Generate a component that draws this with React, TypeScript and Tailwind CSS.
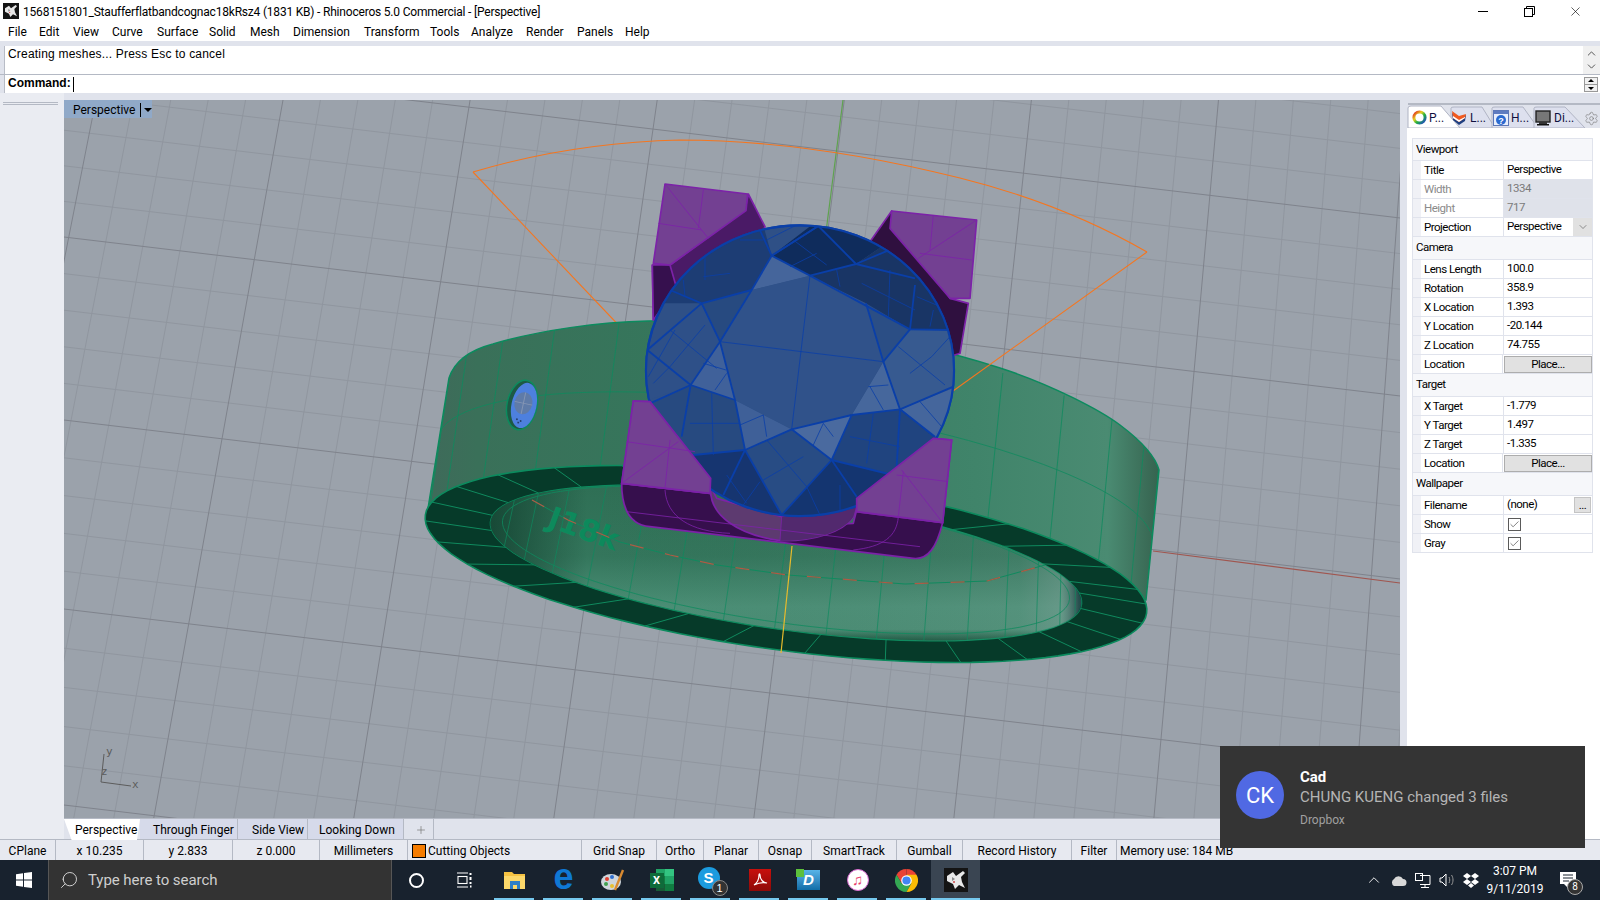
import React from "react";
import { Settings, ChevronUp, ChevronDown, X, Search, Plus, Check } from "lucide-react";

type Pt = [number, number];
const ell = (c: Pt, a: Pt, b: Pt, deg: number): Pt => {
  const t = (deg * Math.PI) / 180;
  return [c[0] + a[0] * Math.cos(t) + b[0] * Math.sin(t), c[1] + a[1] * Math.cos(t) + b[1] * Math.sin(t)];
};
const pts = (list: Pt[]) => list.map((p) => `${p[0].toFixed(1)},${p[1].toFixed(1)}`).join(" ");
const arc = (c: Pt, a: Pt, b: Pt, from: number, to: number, n = 60) => {
  const out: Pt[] = [];
  for (let i = 0; i <= n; i++) out.push(ell(c, a, b, from + ((to - from) * i) / n));
  return out;
};

const BOT: [Pt, Pt, Pt] = [[786, 564], [360, 40], [25, 90]];
const TOP: [Pt, Pt, Pt] = [[804, 416], [355, 48], [25, 92]];
const MID: [Pt, Pt, Pt] = [[795, 492], [357, 44], [25, 90]];
const HOLE: [Pt, Pt, Pt] = [[786, 563], [293, 30], [40, 72]];
const HOLE2: [Pt, Pt, Pt] = [[786, 560], [281, 29], [38, 68]];

function Grid() {
  const minor: React.ReactNode[] = [];
  const major: React.ReactNode[] = [];
  for (let i = -10; i <= 40; i++) {
    const x0 = 211 + 38.86 * i;
    const s = -0.18 + (x0 - 211) * 9.27e-5;
    const l = <line key={`v${i}`} x1={x0 - 400 * s} y1={100} x2={x0 + 318 * s} y2={818} />;
    (((i % 5) + 5) % 5 === 0 ? major : minor).push(l);
  }
  const ys = [-290, -115, 59, 237, 420, 609, 805];
  for (let m = 0; m < ys.length - 1; m++) {
    for (let d = 0; d < 5; d++) {
      const y = ys[m] + ((ys[m + 1] - ys[m]) * d) / 5;
      const l = <line key={`h${m}-${d}`} x1={64} y1={y} x2={1400} y2={y + 1336 * 0.119} />;
      (d === 0 ? major : minor).push(l);
    }
  }
  major.push(<line key="last" x1={64} y1={805} x2={1400} y2={805 + 1336 * 0.119} />);
  return (
    <g>
      <g stroke="#90969f" strokeWidth="1">{minor}</g>
      <g stroke="#7f838c" strokeWidth="1">{major}</g>
    </g>
  );
}

const WALL =
  "M426 521 L449 378 C455 360 470 350 493 344 C540 330 600 322 648 321 C760 318 900 335 1000 368 C1050 384 1100 410 1120 425 C1140 440 1155 455 1159 470 L1146 600 L426 521 Z";

function Ring() {
  const face = arc(BOT[0], BOT[1], BOT[2], 0, 360, 120);
  const lower = arc(BOT[0], BOT[1], BOT[2], 0, 180, 60);
  const hole = arc(HOLE[0], HOLE[1], HOLE[2], 0, 360, 120);
  const hole2 = arc(HOLE2[0], HOLE2[1], HOLE2[2], 0, 360, 120);
  const spokes: React.ReactNode[] = [];
  for (let d = 0; d < 360; d += 13) {
    const o = ell(BOT[0], BOT[1], BOT[2], d);
    const i = ell(HOLE[0], HOLE[1], HOLE[2], d);
    spokes.push(<line key={d} x1={o[0]} y1={o[1]} x2={i[0]} y2={i[1]} />);
  }
  const wallLines: React.ReactNode[] = [];
  for (let d = 178; d <= 362; d += 13) {
    const a = ell(TOP[0], TOP[1], TOP[2], d);
    const b = ell(BOT[0], BOT[1], BOT[2], d);
    wallLines.push(<line key={d} x1={a[0]} y1={a[1]} x2={b[0]} y2={b[1]} />);
  }
  const inner: React.ReactNode[] = [];
  for (let d = 10; d <= 170; d += 10) {
    const a = ell(HOLE[0], HOLE[1], HOLE[2], d);
    const b = ell([800, 440], [280, 30], [40, 70], d);
    inner.push(<line key={d} x1={a[0]} y1={a[1]} x2={b[0]} y2={b[1]} />);
  }
  return (
    <g>
      <defs>
        <linearGradient id="wallG" gradientUnits="userSpaceOnUse" x1="426" y1="0" x2="1159" y2="0">
          <stop offset="0" stopColor="#3f6a5a" />
          <stop offset="0.07" stopColor="#3a7059" />
          <stop offset="0.35" stopColor="#35775c" />
          <stop offset="0.75" stopColor="#40846a" />
          <stop offset="0.93" stopColor="#4a8b72" />
          <stop offset="1" stopColor="#36634f" />
        </linearGradient>
        <linearGradient id="holeG" gradientUnits="userSpaceOnUse" x1="0" y1="488" x2="0" y2="640">
          <stop offset="0" stopColor="#2f6f55" />
          <stop offset="0.45" stopColor="#34765c" />
          <stop offset="0.78" stopColor="#4b8f76" />
          <stop offset="0.93" stopColor="#4a8d74" />
          <stop offset="1" stopColor="#1d5a42" />
        </linearGradient>
        <linearGradient id="holeX" gradientUnits="userSpaceOnUse" x1="493" y1="0" x2="1079" y2="0">
          <stop offset="0" stopColor="#12402f" stopOpacity="0.8" />
          <stop offset="0.16" stopColor="#12402f" stopOpacity="0" />
          <stop offset="0.9" stopColor="#99aaaa" stopOpacity="0.12" />
          <stop offset="0.97" stopColor="#99aaaa" stopOpacity="0.35" />
          <stop offset="1" stopColor="#112233" stopOpacity="0.6" />
        </linearGradient>
        <clipPath id="holeC"><polygon points={pts(hole)} /></clipPath>
        <clipPath id="wallC"><path d={WALL} /></clipPath>
      </defs>
      <polygon points={pts(lower)} fill="#063a29" />
      <path d={WALL} fill="url(#wallG)" stroke="#0c8b5e" strokeWidth="1.5" />
      <g clipPath="url(#wallC)">
        <g stroke="#0f8a5e" strokeWidth="0.8">{wallLines}</g>
        <polyline points={pts(arc(MID[0], MID[1], MID[2], 180, 360))} fill="none" stroke="#0f8a5e" strokeWidth="0.8" />
      </g>
      <polygon points={pts(face)} fill="#063a29" stroke="#0c8b5e" strokeWidth="1.6" />
      <g stroke="#0f8a5e" strokeWidth="1">{spokes}</g>
      <polygon points={pts(hole)} fill="url(#holeG)" stroke="#0c8b5e" strokeWidth="1.2" />
      <polygon points={pts(hole)} fill="url(#holeX)" />
      <g clipPath="url(#holeC)">
        <g stroke="#0f8a5e" strokeWidth="0.7">{inner}</g>
        <polygon points={pts(hole2)} fill="none" stroke="#0f8a5e" strokeWidth="0.8" />
        <text x="546" y="526" transform="rotate(20 546 526)" fontFamily="DejaVu Sans" fontWeight="700" fontSize="30" fill="#0d8a5c">J18k</text>
      </g>
      <polyline points="532,500 568,520 620,542 670,555 717,565 788,575 905,584 987,581 1045,565" fill="none" stroke="#0f8a5e" strokeWidth="1" />
      <polyline points="532,500 568,520 620,542 670,555 717,565 788,575 905,584 987,581 1045,565" fill="none" stroke="#b05a45" strokeWidth="1.2" strokeDasharray="14 22" />
      <line x1="792" y1="546" x2="781" y2="653" stroke="#e8bb2c" strokeWidth="1.2" />
      <g transform="rotate(12 522 405)">
        <ellipse cx="522" cy="405" rx="15" ry="25" fill="#1d5a44" stroke="#0c8b5e" strokeWidth="1.5" />
        <ellipse cx="524" cy="405" rx="12.5" ry="23" fill="#4d80de" />
        <ellipse cx="523" cy="403" rx="9" ry="11" fill="#5f7ba8" />
        <line x1="514" y1="403" x2="532" y2="403" stroke="#8596b4" strokeWidth="1" />
        <line x1="523" y1="392" x2="523" y2="414" stroke="#8596b4" strokeWidth="1" />
        <circle cx="520" cy="420" r="1" fill="#26406f" /><circle cx="524" cy="421" r="1" fill="#26406f" /><circle cx="522" cy="423" r="1" fill="#26406f" />
      </g>
    </g>
  );
}

function Stone() {
  const thick: number[][] = [
    [82, 540, 245, 400], [245, 400, 300, 515], [245, 400, 150, 360], [245, 400, 395, 360], [395, 360, 455, 257], [455, 257, 570, 317],
    [455, 257, 595, 168], [595, 168, 708, 282], [708, 282, 570, 317], [708, 282, 885, 325], [570, 317, 870, 478], [455, 257, 415, 170],
    [870, 478, 790, 575], [870, 478, 885, 345], [870, 478, 1000, 480], [1000, 650, 840, 718], [790, 575, 840, 718], [840, 718, 695, 735],
    [695, 735, 515, 778], [515, 778, 375, 840], [515, 778, 635, 870], [635, 870, 695, 735], [635, 870, 485, 1035], [635, 870, 880, 930],
    [375, 840, 485, 1035], [375, 840, 220, 855], [375, 840, 345, 690], [345, 690, 212, 645], [212, 645, 300, 515], [212, 645, 90, 700],
    [212, 645, 82, 540], [212, 645, 185, 800], [840, 718, 830, 890], [375, 840, 310, 975], [635, 870, 710, 980], [300, 515, 395, 360],
    [345, 690, 300, 515], [708, 282, 820, 235], [790, 575, 738, 400], [840, 718, 945, 800], [595, 168, 455, 257],
  ];
  const thin: number[][] = [
    [300, 515, 790, 575], [570, 317, 515, 778], [150, 480, 290, 595], [85, 620, 165, 480], [150, 590, 255, 465], [100, 640, 150, 590],
    [250, 320, 330, 310], [255, 260, 255, 330], [190, 330, 195, 380], [360, 210, 430, 210], [440, 210, 530, 165], [520, 210, 620, 285],
    [510, 290, 590, 250], [650, 300, 660, 350], [725, 340, 885, 420], [810, 300, 805, 440], [890, 380, 985, 420], [940, 420, 930, 470],
    [835, 530, 975, 645], [870, 610, 935, 560], [935, 560, 990, 500], [745, 650, 805, 645], [750, 650, 790, 720], [845, 720, 940, 800],
    [900, 695, 965, 770], [690, 800, 840, 830], [760, 730, 740, 880], [210, 760, 360, 760], [275, 670, 280, 855], [360, 765, 430, 735],
    [430, 735, 440, 800], [440, 810, 560, 950], [550, 860, 430, 930], [320, 915, 380, 1000], [420, 935, 370, 1005], [560, 950, 600, 1035],
    [660, 945, 660, 1030], [610, 760, 640, 800], [580, 825, 610, 760], [250, 580, 318, 600], [285, 660, 320, 610],
  ];
  return (
    <g transform="translate(620 170) scale(0.33333)">
      <defs>
        <clipPath id="gemC"><ellipse cx="540" cy="602" rx="462" ry="436" /></clipPath>
      </defs>
      <g stroke="#7c22a8" strokeWidth="5" strokeLinejoin="round">
        <polygon points="97,285 150,285 375,120 385,72 435,170 380,300 170,360 100,450" fill="#4a1a66" />
        <polygon points="97,285 150,285 170,355 100,450" fill="#36104e" />
        <polygon points="135,42 383,72 378,122 150,285 100,280" fill="#734092" />
        <polygon points="815,123 750,215 960,440 990,560 1020,550 1045,400 990,385" fill="#2f103f" />
        <polygon points="815,123 1070,150 1050,385 990,385 810,175" fill="#734092" />
        <path d="M5 940 C5 1020 30 1065 90 1070 L880 1165 C925 1170 950 1130 968 1058 L710 1020 L700 1060 L480 1070 L300 1010 L270 970 Z" fill="#360f4d" />
        <polygon points="40,693 90,695 272,925 270,970 5,940" fill="#734092" />
        <polygon points="940,805 995,810 968,1058 710,1025 710,985" fill="#734092" />
        <path d="M272 950 L290 985 L485 1040 L710 1005 L700 1040 C670 1085 580 1115 480 1112 C360 1095 265 1040 272 950 Z" fill="#5d3a70" />
        <path d="M485 1040 L710 1005 L700 1040 C670 1085 580 1115 480 1112 Z" fill="#52296e" stroke="none" />
      </g>
      <g stroke="#7c22a8" strokeWidth="2.5" fill="none">
        <line x1="135" y1="42" x2="265" y2="205" />
        <line x1="250" y1="60" x2="235" y2="175" />
        <line x1="115" y1="160" x2="245" y2="180" />
        <line x1="1070" y1="150" x2="895" y2="265" />
        <line x1="940" y1="135" x2="930" y2="240" />
        <line x1="900" y1="250" x2="1055" y2="270" />
        <line x1="20" y1="1025" x2="900" y2="1130" />
        <path d="M135 960 C140 1040 210 1085 330 1090" />
        <path d="M835 1040 C830 1100 790 1130 700 1140" />
        <line x1="485" y1="1040" x2="480" y2="1112" />
      </g>
      <ellipse cx="540" cy="602" rx="462" ry="436" fill="#2f5086" stroke="#0a3fa8" strokeWidth="7" />
      <g clipPath="url(#gemC)">
        <polygon points="455,257 595,150 830,200 708,282 570,317" fill="#0f2c5c" />
        <polygon points="60,400 245,400 395,360 455,257 420,130 200,200" fill="#1d3d74" />
        <polygon points="708,282 570,317 870,478 1020,480 960,300 830,200" fill="#193565" />
        <polygon points="455,257 570,317 395,360" fill="#45659b" />
        <polygon points="245,400 395,360 300,515" fill="#274a80" />
        <polygon points="82,540 245,400 300,515 212,645 60,700" fill="#2e5088" />
        <polygon points="300,515 345,690 212,645" fill="#40619a" />
        <polygon points="212,645 345,690 375,840 220,855 120,760 90,700" fill="#274a80" />
        <polygon points="345,690 515,778 375,840" fill="#3f6098" />
        <polygon points="515,778 695,735 635,870" fill="#4a6a9f" />
        <polygon points="375,840 515,778 635,870 485,1035" fill="#284c84" />
        <polygon points="220,855 375,840 485,1035 260,1000" fill="#163570" />
        <polygon points="635,870 880,930 710,1050 485,1035" fill="#143570" />
        <polygon points="635,870 695,735 840,718 945,800 880,930" fill="#20447f" />
        <polygon points="695,735 790,575 840,718" fill="#46679c" />
        <polygon points="790,575 870,478 1010,480 1010,650 840,718" fill="#375a90" />
        <polygon points="840,718 1010,650 965,790 945,800" fill="#45669c" />
        <polygon points="738,400 870,478 790,575" fill="#2b4e85" />
        <polygon points="300,515 395,360 570,317 738,400 790,575 695,735 515,778 345,690" fill="#30528a" />
        <g stroke="#0a3fa8" strokeWidth="2.4">{thin.map((l, i) => <line key={i} x1={l[0]} y1={l[1]} x2={l[2]} y2={l[3]} />)}</g>
        <g stroke="#0a3fa8" strokeWidth="5.5">{thick.map((l, i) => <line key={i} x1={l[0]} y1={l[1]} x2={l[2]} y2={l[3]} />)}</g>
      </g>
      <ellipse cx="540" cy="602" rx="462" ry="436" fill="none" stroke="#0a3fa8" strokeWidth="6" />
      <polygon points="40,693 90,695 272,925 270,970 5,940" fill="#734092" stroke="#7c22a8" strokeWidth="5" />
      <polygon points="940,805 995,810 968,1058 710,1025 710,985" fill="#734092" stroke="#7c22a8" strokeWidth="5" />
      <g stroke="#7c22a8" strokeWidth="2.5">
        <line x1="5" y1="940" x2="175" y2="815" />
        <line x1="20" y1="815" x2="225" y2="845" />
        <line x1="150" y1="810" x2="135" y2="955" />
        <line x1="968" y1="1058" x2="845" y2="900" />
        <line x1="850" y1="905" x2="835" y2="1040" />
        <line x1="830" y1="915" x2="985" y2="935" />
      </g>
    </g>
  );
}

function Scene() {
  return (
    <svg className="absolute inset-0" width="1336" height="718" viewBox="64 100 1336 718">
      <Grid />
      <line x1="1153" y1="551" x2="1400" y2="583" stroke="#a0564f" strokeWidth="1.2" />
      <line x1="843" y1="100" x2="826" y2="232" stroke="#5fa24f" strokeWidth="1.2" />
      <path d="M473 172 C530 155 600 142 680 140 C780 140 880 158 960 178 C1040 198 1100 225 1147 252" fill="none" stroke="#f5761f" strokeWidth="1.1" />
      <line x1="473" y1="172" x2="646" y2="354" stroke="#f5761f" strokeWidth="1.1" />
      <Ring />
      <line x1="1147" y1="252" x2="953" y2="391" stroke="#f5761f" strokeWidth="1.1" />
      <Stone />
      <g stroke="#5c5c5c" strokeWidth="1" fill="none">
        <line x1="101" y1="782" x2="131" y2="786" />
        <line x1="101" y1="782" x2="104" y2="754" />
      </g>
      <g fill="#5c5c5c" fontFamily="DejaVu Sans Mono" fontSize="11">
        <text x="132" y="788">x</text>
        <text x="106" y="755">y</text>
        <text x="101" y="775">z</text>
      </g>
    </svg>
  );
}

function PRow({ label, value, off, children }: { label: string; value?: string; off?: boolean; children?: React.ReactNode }) {
  return (
    <div className="flex h-[19px] border-b border-[#e0e3ec]">
      <div className="w-[8px] bg-[#f0f1f6]" />
      <div className={`w-[83px] pl-[3px] border-r border-[#e0e3ec] leading-[19px] ${off ? "text-[#8a8a8a]" : "text-black"}`}>{label}</div>
      <div className={`flex-1 flex items-center pl-[3px] ${off ? "bg-[#dfe2ea] text-[#7a7a7a]" : "text-black"}`}>
        {value !== undefined ? <span>{value}</span> : null}
        {children}
      </div>
    </div>
  );
}
function PHead({ label, h = 23 }: { label: string; h?: number }) {
  return (
    <div className={`pl-[3px] bg-[#f6f7fa] border-b border-[#e0e3ec] flex items-center ${h === 22 ? "h-[22px]" : "h-[23px]"}`}>{label}</div>
  );
}
function PlaceBtn() {
  return (
    <div className="ml-[-2px] w-[88px] h-[17px] bg-[#e1e1e1] border border-[#adadad] text-center leading-[15px]">Place...</div>
  );
}
function CheckBox() {
  return (
    <div className="w-[13px] h-[13px] ml-[1px] bg-white border border-[#5a5a5a] flex items-center justify-center">
      <Check size={11} strokeWidth={1.6} color="#555" />
    </div>
  );
}

function Panel() {
  return (
    <div className="w-[193px] h-full flex flex-col">
      <div className="h-[3px] border-b-2 border-[#b4b9c4] mt-[9px] ml-[1px]" />
      <div className="relative h-[23px]">
        <svg className="absolute inset-0" width="193" height="23" viewBox="0 0 193 23">
          <path d="M44 23 L44 3 Q44 2 47 2 L75 2 L88 23Z" fill="#dde0ee" stroke="#b0b4c4" />
          <path d="M85 23 L85 3 Q85 2 88 2 L116 2 L131 23Z" fill="#dde0ee" stroke="#b0b4c4" />
          <path d="M127 23 L127 3 Q127 2 130 2 L158 2 L178 23Z" fill="#dde0ee" stroke="#b0b4c4" />
          <path d="M1 23 L1 3 Q1 1 4 1 L34 1 L53 23Z" fill="#ffffff" stroke="#b0b4c4" />
        </svg>
        <div className="relative flex h-full items-center pl-[5px] pt-[2px] text-[12px]">
          <div className="w-[17px] h-[15px] flex items-center">
            <svg width="15" height="15" viewBox="0 0 15 15">
              <defs>
                <linearGradient id="wh" x1="0" y1="0" x2="1" y2="1">
                  <stop offset="0" stopColor="#e02020" /><stop offset="0.35" stopColor="#e8d020" />
                  <stop offset="0.6" stopColor="#20b040" /><stop offset="1" stopColor="#2040d0" />
                </linearGradient>
              </defs>
              <circle cx="7.5" cy="7.5" r="5.6" fill="none" stroke="url(#wh)" strokeWidth="3" />
            </svg>
          </div>
          <span className="w-[22px] text-[#101040]">P...</span>
          <div className="w-[19px] h-[16px]">
            <svg width="16" height="16" viewBox="0 0 16 16">
              <polygon points="1,3 8,8 15,5 14,11 8,15 2,10" fill="#1f3f80" />
              <polygon points="1,1 8,6 15,4 14,8 8,12 2,8" fill="#f05a20" />
              <polygon points="2,6 8,10 14,7 14,8 8,12 2,8" fill="#fff" />
            </svg>
          </div>
          <span className="w-[23px] text-[#101040]">L...</span>
          <div className="w-[18px] h-[16px]">
            <svg width="16" height="16" viewBox="0 0 16 16">
              <rect x="0.5" y="0.5" width="15" height="15" fill="#e8eefc" stroke="#5d78b8" />
              <rect x="1" y="1" width="14" height="3" fill="#5e7bc0" />
              <circle cx="8" cy="10" r="5" fill="#2a6ad0" />
              <text x="8" y="13.5" fontSize="9" fontWeight="700" textAnchor="middle" fill="#fff" fontFamily="Liberation Sans">?</text>
            </svg>
          </div>
          <span className="w-[24px] text-[#101040]">H...</span>
          <div className="w-[19px] h-[16px]">
            <svg width="16" height="16" viewBox="0 0 16 16">
              <rect x="1" y="1" width="14" height="11" fill="#777" stroke="#222" strokeWidth="1.4" />
              <rect x="4" y="12" width="8" height="2" fill="#333" />
              <rect x="2" y="14" width="12" height="1.5" fill="#111" />
            </svg>
          </div>
          <span className="text-[#101040]">Di...</span>
        </div>
        <Settings size={15} strokeWidth={1} color="#777" className="absolute right-[1px] top-[6px]" />
      </div>
      <div className="flex-1 bg-white pl-[5px] pr-[7px] pt-[10px] text-[11.5px] tracking-[-0.5px] text-black">
        <div className="border border-[#e0e3ec] border-b-0">
          <PHead label="Viewport" h={22} />
          <PRow label="Title" value="Perspective" />
          <PRow label="Width" value="1334" off />
          <PRow label="Height" value="717" off />
          <PRow label="Projection">
            <span className="flex-1">Perspective</span>
            <div className="w-[19px] h-[18px] mr-0 bg-[#e1e1e1] flex items-center justify-center">
              <ChevronDown size={12} strokeWidth={1} color="#333" />
            </div>
          </PRow>
          <PHead label="Camera" />
          <PRow label="Lens Length" value="100.0" />
          <PRow label="Rotation" value="358.9" />
          <PRow label="X Location" value="1.393" />
          <PRow label="Y Location" value="-20.144" />
          <PRow label="Z Location" value="74.755" />
          <PRow label="Location"><PlaceBtn /></PRow>
          <PHead label="Target" />
          <PRow label="X Target" value="-1.779" />
          <PRow label="Y Target" value="1.497" />
          <PRow label="Z Target" value="-1.335" />
          <PRow label="Location"><PlaceBtn /></PRow>
          <PHead label="Wallpaper" />
          <PRow label="Filename">
            <span className="flex-1">(none)</span>
            <div className="w-[17px] h-[16px] bg-[#e1e1e1] border border-[#c4c4c4] text-center leading-[14px] mr-px">...</div>
          </PRow>
          <PRow label="Show"><CheckBox /></PRow>
          <PRow label="Gray"><CheckBox /></PRow>
        </div>
      </div>
    </div>
  );
}

const statusItems: { t: string; cls: string; left?: boolean; sw?: boolean }[] = [
  { t: "CPlane", cls: "w-[56px]" },
  { t: "x 10.235", cls: "w-[88px]" },
  { t: "y 2.833", cls: "w-[89px]" },
  { t: "z 0.000", cls: "w-[87px]" },
  { t: "Millimeters", cls: "w-[88px]" },
  { t: "Cutting Objects", cls: "w-[174px]", left: true, sw: true },
  { t: "Grid Snap", cls: "w-[75px]" },
  { t: "Ortho", cls: "w-[47px]" },
  { t: "Planar", cls: "w-[55px]" },
  { t: "Osnap", cls: "w-[53px]" },
  { t: "SmartTrack", cls: "w-[85px]" },
  { t: "Gumball", cls: "w-[66px]" },
  { t: "Record History", cls: "w-[109px]" },
  { t: "Filter", cls: "w-[45px]" },
];

function TbSlot({ children, run, active, w = "w-[49px]" }: { children: React.ReactNode; run?: boolean; active?: boolean; w?: string }) {
  return (
    <div className={`relative h-full flex items-center justify-center ${w} ${active ? "bg-[#3a4552]" : ""}`}>
      {children}
      {run ? <div className={`absolute bottom-0 h-[2px] bg-[#76c9ee] ${active ? "left-0 right-0" : "left-[4px] right-[5px]"}`} /> : null}
    </div>
  );
}

function RhinoIcon({ s = 16 }: { s?: number }) {
  return (
    <svg width={s} height={s} viewBox="0 0 24 24">
      <rect x="0" y="0" width="24" height="24" fill="#141414" />
      <polygon points="3,8 9,4 12,8 19,3 21,5 17,9 18,14 21,20 15,17 11,21 9,16 3,13" fill="#e8e8e8" />
      <polygon points="8,9 11,11 8,13" fill="#8a8a8a" />
      <circle cx="10" cy="14" r="1" fill="#c44" />
    </svg>
  );
}

function Taskbar() {
  return (
    <div className="h-[40px] bg-[#18222e] flex items-stretch text-white">
      <div className="w-[48px] flex items-center justify-center">
        <svg width="16" height="16" viewBox="0 0 16 16" fill="#fff">
          <polygon points="0,2.3 7,1.3 7,7.5 0,7.5" />
          <polygon points="8,1.1 16,0 16,7.5 8,7.5" />
          <polygon points="0,8.5 7,8.5 7,14.7 0,13.7" />
          <polygon points="8,8.5 16,8.5 16,16 8,14.9" />
        </svg>
      </div>
      <div className="w-[344px] bg-[#333333] border-x border-[#565656] flex items-center pl-[10px] gap-[9px]">
        <Search size={20} strokeWidth={1.1} color="#ddd" className="-scale-x-100" />
        <span className="text-[15px] text-[#cfcfcf] pt-px tracking-[-0.05px]">Type here to search</span>
      </div>
      <TbSlot w="w-[48px]"><div className="w-[15px] h-[15px] rounded-full border-2 border-white" /></TbSlot>
      <TbSlot w="w-[50px]">
        <svg width="16" height="16" viewBox="0 0 16 16" fill="none" stroke="#fff" strokeWidth="1.1">
          <path d="M0 1H11M0 15H11" /><rect x="1" y="4.5" width="9" height="7" /><path d="M13.5 1v2M13.5 5v3M13.5 10v2M13 14.5h1.5" strokeWidth="2" />
        </svg>
      </TbSlot>
      <TbSlot run>
        <svg width="22" height="20" viewBox="0 0 22 20">
          <path d="M0 2h8l2 2h11v15H0z" fill="#f5c242" />
          <path d="M0 6h21v13H0z" fill="#fcd86a" />
          <path d="M6 11h10v8h-3v-4h-4v4H6z" fill="#2e7fc8" />
        </svg>
      </TbSlot>
      <TbSlot run>
        <span className="text-[#0f78d4] text-[36px] font-bold leading-none -translate-y-[3px]" style={{ fontFamily: "Liberation Sans, sans-serif" }}>e</span>
      </TbSlot>
      <TbSlot run>
        <svg width="24" height="24" viewBox="0 0 24 24">
          <ellipse cx="10" cy="14" rx="10" ry="8" fill="#cfd6dc" />
          <circle cx="6" cy="11" r="2" fill="#e04030" /><circle cx="11" cy="9" r="2" fill="#3070d0" />
          <circle cx="5" cy="16" r="2" fill="#40a050" /><circle cx="11" cy="18" r="2" fill="#e8c030" />
          <line x1="22" y1="2" x2="14" y2="22" stroke="#d88a30" strokeWidth="2.4" />
        </svg>
      </TbSlot>
      <TbSlot run>
        <div className="relative w-[24px] h-[23px]">
          <div className="absolute right-0 top-0 w-[18px] h-[23px] grid grid-cols-2 grid-rows-3">
            <div className="bg-[#21a366]" /><div className="bg-[#33c481]" />
            <div className="bg-[#107c41]" /><div className="bg-[#21a366]" />
            <div className="bg-[#185c37]" /><div className="bg-[#107c41]" />
          </div>
          <div className="absolute left-0 top-[4px] w-[14px] h-[15px] bg-[#0e6b3a] text-white text-[11px] font-bold text-center leading-[15px]">X</div>
        </div>
      </TbSlot>
      <TbSlot run>
        <div className="relative w-[22px] h-[22px] rounded-full bg-[#1b9bdf] text-white text-[15px] font-bold text-center leading-[22px] -translate-x-[2px] -translate-y-[2px]" style={{ fontFamily: "Liberation Sans, sans-serif" }}>
          S
          <div className="absolute left-[14px] top-[13px] w-[16px] h-[16px] rounded-full bg-[#333] border border-[#888] text-[11px] font-normal leading-[14px]">1</div>
        </div>
      </TbSlot>
      <TbSlot run>
        <div className="w-[22px] h-[22px] bg-gradient-to-b from-[#c8100c] to-[#8e0a08] flex items-center justify-center">
          <svg width="16" height="16" viewBox="0 0 16 16" fill="none" stroke="#fff" strokeWidth="1.2">
            <path d="M2 13C5 11 7 7 7 3 7 1.5 8 1.5 8 3 8 7 11 11 15 11 11 10 6 11 2 13Z" />
          </svg>
        </div>
      </TbSlot>
      <TbSlot run>
        <div className="relative w-[23px] h-[20px] bg-gradient-to-b from-[#58b4e8] to-[#0f6ea8] text-white text-[15px] italic font-bold text-center leading-[20px]" style={{ fontFamily: "Liberation Sans, sans-serif" }}>
          D
          <div className="absolute -left-[1px] -top-[1px] w-[8px] h-[8px] bg-[#5cc03c]" />
        </div>
      </TbSlot>
      <TbSlot run>
        <div className="w-[22px] h-[22px] rounded-full bg-white flex items-center justify-center text-[#e83a6a] text-[15px] border-[1.5px] border-[#d86ad0]">♫</div>
      </TbSlot>
      <TbSlot run>
        <svg width="23" height="23" viewBox="0 0 24 24">
          <path d="M12 12 L12 0 A12 12 0 0 1 22.4 6 Z" fill="#ea4335" />
          <path d="M12 0 A12 12 0 0 0 1.6 6 L7 15 L12 12 Z" fill="#ea4335" />
          <path d="M1.6 6 A12 12 0 0 0 12 24 L17 15 L7 15Z" fill="#34a853" />
          <path d="M22.4 6 H12 L17 15 L12 24 A12 12 0 0 0 22.4 6Z" fill="#fbbc05" />
          <circle cx="12" cy="12" r="5.5" fill="#fff" /><circle cx="12" cy="12" r="4.3" fill="#4285f4" />
        </svg>
      </TbSlot>
      <TbSlot run active><RhinoIcon s={24} /></TbSlot>
      <div className="w-[382px]" />
      <div className="w-[24px] flex items-center justify-center"><ChevronUp size={18} strokeWidth={1.2} color="#fff" /></div>
      <div className="w-[24px] flex items-center justify-center">
        <svg width="17" height="12" viewBox="0 0 17 12" fill="#d8d8d8"><path d="M4 12a4 4 0 0 1 0-7 5 5 0 0 1 9 0 3.5 3.5 0 0 1 0 7z" /></svg>
      </div>
      <div className="w-[25px] flex items-center justify-center">
        <svg width="17" height="17" viewBox="0 0 17 17" fill="none" stroke="#fff" strokeWidth="1">
          <rect x="1.5" y="1.5" width="7" height="7" /><path d="M6 3.5h10v9H6M11 12.5v3M7 15.5h8" />
        </svg>
      </div>
      <div className="w-[23px] flex items-center justify-center">
        <svg width="16" height="16" viewBox="0 0 16 16" fill="none" stroke="#fff" strokeWidth="1">
          <path d="M1 6h2l4-4v12l-4-4H1z" /><path d="M10 5c1 2 1 4 0 6M12.5 3c2 3 2 7 0 10" stroke="#999" />
        </svg>
      </div>
      <div className="w-[25px] flex items-center justify-center">
        <svg width="16" height="15" viewBox="0 0 16 15" fill="#fff">
          <polygon points="4,0 8,3 4,6 0,3" /><polygon points="12,0 16,3 12,6 8,3" />
          <polygon points="4,6 8,9 4,12 0,9" /><polygon points="12,6 16,9 12,12 8,9" /><polygon points="8,10 11,12.5 8,15 5,12.5" />
        </svg>
      </div>
      <div className="w-[64px] flex flex-col items-center justify-center text-[12px] leading-[18px] text-white">
        <div>3:07 PM</div>
        <div>9/11/2019</div>
      </div>
      <div className="relative w-[45px] flex items-center justify-center">
        <svg width="16" height="16" viewBox="0 0 16 16" fill="#fff" className="-translate-x-[2px]">
          <path d="M0 0h16v12H8v4l-4-4H0z" /><path d="M3 3h10M3 6h10M3 9h6" stroke="#18222e" />
        </svg>
        <div className="absolute left-[20px] top-[19px] w-[16px] h-[16px] rounded-full bg-[#333] border border-[#aaa] text-[10px] text-center leading-[14px]">8</div>
      </div>
    </div>
  );
}

export default function App() {
  const menu: [string, string][] = [
    ["File", "w-[31px]"], ["Edit", "w-[34px]"], ["View", "w-[39px]"], ["Curve", "w-[45px]"], ["Surface", "w-[52px]"], ["Solid", "w-[41px]"],
    ["Mesh", "w-[43px]"], ["Dimension", "w-[71px]"], ["Transform", "w-[66px]"], ["Tools", "w-[41px]"], ["Analyze", "w-[55px]"], ["Render", "w-[51px]"], ["Panels", "w-[48px]"], ["Help", "w-[30px]"],
  ];
  return (
    <div className="relative w-[1600px] h-[900px] overflow-hidden flex flex-col bg-[#e0e3ec] text-[12px] text-black" style={{ fontFamily: "Roboto, sans-serif" }}>
      <div className="h-[22px] bg-white flex items-center pl-[3px] gap-[4px]">
        <RhinoIcon />
        <span className="flex-1 text-[12px] tracking-[-0.2px] pt-px">1568151801_Staufferflatbandcognac18kRsz4 (1831 KB) - Rhinoceros 5.0 Commercial - [Perspective]</span>
        <div className="flex mr-[2px]">
          <div className="w-[46px] flex justify-center items-center"><div className="w-[10px] h-px bg-black" /></div>
          <div className="w-[46px] flex justify-center items-center">
            <svg width="11" height="11" viewBox="0 0 11 11" fill="none" stroke="#000"><rect x="0.5" y="2.5" width="8" height="8" /><path d="M2.5 2.5V.5h8v8H8.5" /></svg>
          </div>
          <div className="w-[46px] flex justify-center items-center"><X size={15} strokeWidth={1} /></div>
        </div>
      </div>
      <div className="h-[19px] bg-white flex items-center pl-[8px] pt-px">
        {menu.map(([t, w]) => <span key={t} className={w}>{t}</span>)}
      </div>
      <div className="h-[5px]" />
      <div className="h-[28px] bg-white flex ml-[4px] border-l border-[#b8bcc6]">
        <div className="flex-1 pl-[3px] leading-[16px] tracking-[0.2px]" style={{ fontFamily: "Liberation Sans, sans-serif" }}>Creating meshes... Press Esc to cancel</div>
        <div className="w-[17px] bg-[#f0f0f0] flex flex-col items-center pt-[1px]">
          <ChevronUp size={13} strokeWidth={1.8} color="#555" />
          <ChevronDown size={13} strokeWidth={1.8} color="#555" />
        </div>
      </div>
      <div className="h-[1px] bg-[#b4b9c4]" />
      <div className="h-[18px] bg-white flex items-center ml-[4px] border-l border-[#b8bcc6]">
        <span className="pl-[3px] font-bold pr-[2px] pb-[2px]" style={{ fontFamily: "Liberation Sans, sans-serif" }}>Command:</span>
        <div className="w-px h-[15px] bg-black" />
        <div className="flex-1" />
        <div className="w-[14px] h-[15px] mr-[2px] bg-[#f0f0f0] border border-[#999] flex flex-col items-center justify-center gap-[2px]">
          <div className="w-0 h-0 border-x-[3px] border-x-transparent border-b-[3px] border-b-black" />
          <div className="w-[12px] h-px bg-[#999]" />
          <div className="w-0 h-0 border-x-[3px] border-x-transparent border-t-[3px] border-t-black" />
        </div>
      </div>
      <div className="h-[747px] flex">
        <div className="w-[1400px] flex flex-col">
          <div className="h-[7px] flex">
            <div className="w-[64px] bg-[#eaecf2]" />
          </div>
          <div className="h-[718px] flex">
            <div className="w-[64px] bg-[#eaecf2] pl-[3px]">
              <div className="w-[55px] h-[3px] border-y border-[#b4b9c4] mt-[2px]" />
            </div>
            <div className="relative w-[1336px] h-[718px] overflow-hidden bg-[#9ba2ab]">
              <Scene />
              <div className="absolute left-0 top-0 w-[88px] h-[18px] bg-[#90a9c8] flex items-center pl-[9px] pt-px">
                <span className="w-[68px]">Perspective</span>
                <div className="w-px h-[14px] bg-black" />
                <div className="ml-[3px] w-0 h-0 border-x-[4px] border-x-transparent border-t-[4px] border-t-black" />
              </div>
            </div>
          </div>
          <div className="h-[22px] flex">
            <div className="w-[64px] bg-[#eaecf2]" />
            <div className="flex-1 flex border-t border-[#b4b9c4]">
              <div className="w-[76px] bg-white pl-[11px] pt-px leading-[20px] [clip-path:polygon(0_0,100%_0,96%_100%,10%_100%)]">Perspective</div>
              <div className="w-[98px] bg-[#d6daea] pl-[13px] pt-px leading-[20px] border-r border-[#b4b9c4]">Through Finger</div>
              <div className="w-[70px] bg-[#d6daea] pl-[14px] pt-px leading-[20px] border-r border-[#b4b9c4]">Side View</div>
              <div className="w-[96px] bg-[#d6daea] pl-[11px] pt-px leading-[20px] border-r border-[#b4b9c4]">Looking Down</div>
              <div className="w-[30px] flex items-center justify-center pl-[4px] border-r border-[#b4b9c4]"><Plus size={12} strokeWidth={1.4} color="#777" /></div>
            </div>
          </div>
        </div>
        <div className="w-[200px] pl-[7px]"><Panel /></div>
      </div>
      <div className="h-[21px] flex border-t border-[#b4b9c4] bg-[#e7e9f0] text-[12px] -mt-[1px]">
        {statusItems.map((s) => (
          <div key={s.t} className={`${s.cls} border-r border-[#b4b9c4] flex items-center pt-px ${s.left ? "pl-[4px]" : "justify-center"}`}>
            {s.sw ? <div className="w-[14px] h-[14px] bg-[#f57c00] border border-black mr-[2px]" /> : null}
            <span>{s.t}</span>
          </div>
        ))}
        <div className="pl-[3px] flex items-center pt-px">Memory use: 184 MB</div>
      </div>
      <Taskbar />
      <div className="absolute left-[1220px] top-[746px] w-[365px] h-[102px] bg-[#343434] flex items-start pl-[16px] pt-[25px] text-white">
        <div className="w-[48px] h-[48px] rounded-full bg-[#5069e3] flex items-center justify-center text-[22px]">CK</div>
        <div className="ml-[16px] -mt-[4px] flex flex-col">
          <span className="text-[15px] font-bold leading-[20px]">Cad</span>
          <span className="text-[15px] leading-[20px] text-[#b4b4b4]">CHUNG KUENG changed 3 files</span>
          <span className="text-[12px] leading-[16px] text-[#a0a0a0] mt-[5px]">Dropbox</span>
        </div>
      </div>
    </div>
  );
}
